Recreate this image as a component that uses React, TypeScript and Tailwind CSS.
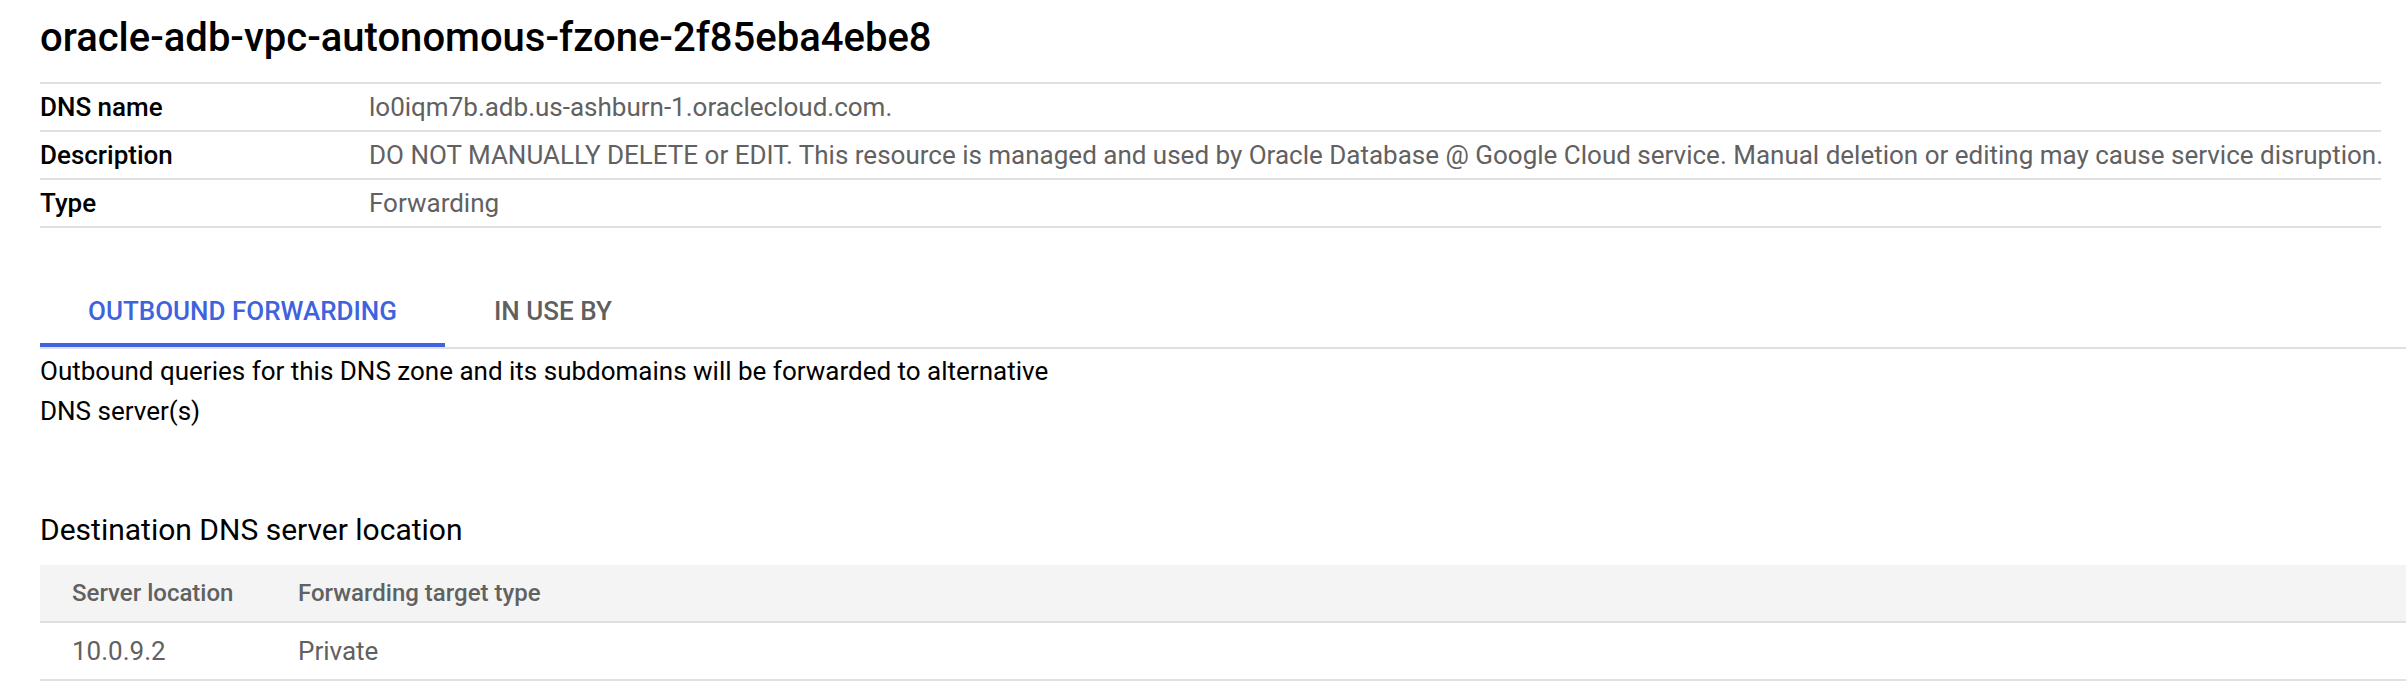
import React from 'react';

const rows = [
  { label: 'DNS name', value: 'lo0iqm7b.adb.us-ashburn-1.oraclecloud.com.' },
  {
    label: 'Description',
    value:
      'DO NOT MANUALLY DELETE or EDIT. This resource is managed and used by Oracle Database @ Google Cloud service. Manual deletion or editing may cause service disruption.',
  },
  { label: 'Type', value: 'Forwarding' },
];

export default function App() {
  return (
    <div className="min-h-[700px] bg-white pl-10 font-['Roboto',sans-serif] text-[#202124]">
      <div className="pr-[25px]">
        <h1 className="pt-[14px] pb-[20px] text-[40px] leading-[48px] font-medium text-black">
          oracle-adb-vpc-autonomous-fzone-2f85eba4ebe8
        </h1>
        <div className="border-t-2 border-[#e0e0e0]">
          {rows.map((row) => (
            <div key={row.label} className="flex h-12 items-center border-b-2 border-[#e0e0e0] text-[26px]">
              <div className="w-[329px] shrink-0 font-medium text-black">{row.label}</div>
              <div className="whitespace-nowrap text-[#616161]">{row.value}</div>
            </div>
          ))}
        </div>
      </div>

      <div className="mt-[51px] flex border-b-2 border-[#e0e0e0]">
        <button className="h-[68px] w-[405px] border-b-4 border-[#3e63dd] text-[26px] font-medium text-[#3e63dd]">
          OUTBOUND FORWARDING
        </button>
        <button className="h-[68px] px-[49px] pb-1 text-[26px] font-medium text-[#5f5f5f]">IN USE BY</button>
      </div>

      <p className="max-w-[1030px] pt-[2px] text-[26px] leading-10 text-black">
        Outbound queries for this DNS zone and its subdomains will be forwarded to alternative DNS server(s)
      </p>

      <h2 className="mt-[79px] text-[30px] leading-10 text-black">Destination DNS server location</h2>

      <div className="mt-[15px]">
        <div className="flex h-[58px] items-center border-b-2 border-[#e0e0e0] bg-[#f4f4f4] text-[24px] font-medium text-[#616161]">
          <div className="w-[258px] pl-8">Server location</div>
          <div>Forwarding target type</div>
        </div>
        <div className="flex h-[58px] items-center border-b-2 border-[#e0e0e0] text-[26px] text-[#616161]">
          <div className="w-[258px] pl-8">10.0.9.2</div>
          <div>Private</div>
        </div>
      </div>
    </div>
  );
}
